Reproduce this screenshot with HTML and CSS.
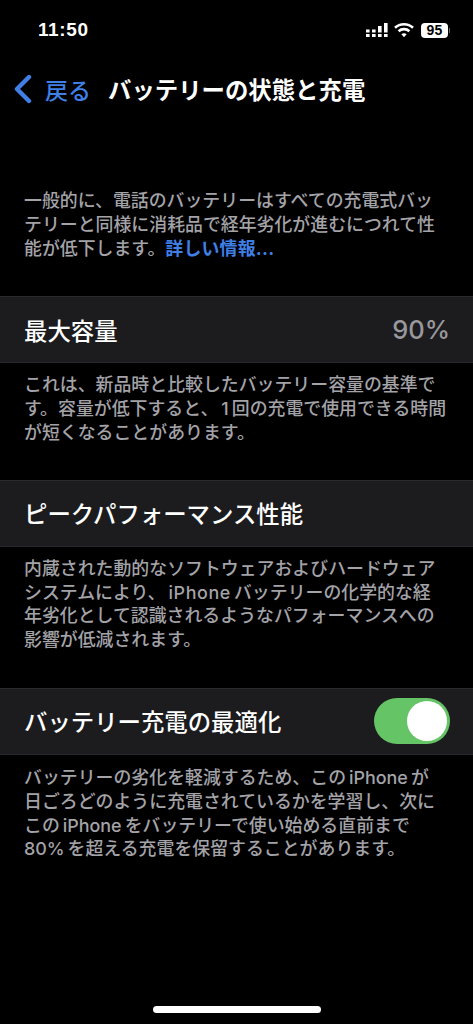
FILE: index.html
```html
<!DOCTYPE html>
<html lang="ja">
<head>
<meta charset="utf-8">
<title>バッテリーの状態と充電</title>
<link rel="stylesheet" href="styles.css">
</head>
<body>
<div class="phone">
  <header class="status">
    <span class="time">11:50</span>
    <div class="status-icons">
      <svg class="cell" width="22" height="16" viewBox="0 0 22 16" fill="#fff">
        <rect x="0" y="7.5" width="3.6" height="3"/><rect x="0" y="12" width="3.6" height="3"/>
        <rect x="6" y="7.5" width="3.6" height="3"/><rect x="6" y="12" width="3.6" height="3"/>
        <rect x="12" y="4" width="3.6" height="6.5"/><rect x="12" y="12" width="3.6" height="3"/>
        <rect x="18" y="1" width="3.6" height="9.5"/><rect x="18" y="12" width="3.6" height="3"/>
      </svg>
      <svg class="wifi" width="20" height="16" viewBox="0 0 20 16" fill="none" stroke="#fff" stroke-width="2.6">
        <path d="M1 5.8C6 1 14 1 19 5.8"/>
        <path d="M4.6 9.2C7.6 6.4 12.4 6.4 15.4 9.2"/>
        <path d="M10 15.2L7.4 12.2C8.8 11 11.2 11 12.6 12.2Z" fill="#fff" stroke="none"/>
      </svg>
      <div class="battery"><span class="battery-level">95</span><i class="battery-tip"></i></div>
    </div>
  </header>

  <nav class="navbar">
    <svg class="chevron" width="20" height="30" viewBox="0 0 20 30" fill="none" stroke="#3f7fe6" stroke-width="4.4" stroke-linecap="round" stroke-linejoin="round">
      <path d="M16 3L4 15L16 27"/>
    </svg>
    <span class="back">戻る</span>
    <h1 class="title">バッテリーの状態と充電</h1>
  </nav>

  <p class="note intro">一般的に、電話のバッテリーはすべての充電式バッ<br>テリーと同様に消耗品で経年劣化が進むにつれて性<br>能が低下します。<a class="link">詳しい情報...</a></p>

  <section class="row first">
    <span class="label">最大容量</span>
    <span class="value">90%</span>
  </section>
  <p class="note">これは、新品時と比較したバッテリー容量の基準で<br>す。容量が低下すると、<span class="lat">1</span>回の充電で使用できる時間<br>が短くなることがあります。</p>

  <section class="row second">
    <span class="label">ピークパフォーマンス性能</span>
  </section>
  <p class="note">内蔵された動的なソフトウェアおよびハードウェア<br>システムにより、<span class="lat wide">iPhone</span>バッテリーの化学的な経<br>年劣化として認識されるようなパフォーマンスへの<br>影響が低減されます。</p>

  <section class="row third">
    <span class="label">バッテリー充電の最適化</span>
    <div class="toggle"><i class="knob"></i></div>
  </section>
  <p class="note">バッテリーの劣化を軽減するため、この<span class="lat">iPhone</span>が<br>日ごろどのように充電されているかを学習し、次に<br>この<span class="lat">iPhone</span>をバッテリーで使い始める直前まで<br><span class="lat start">80%</span>を超える充電を保留することがあります。</p>

  <div class="home-indicator"></div>
</div>
</body>
</html>
```
FILE: styles.css
```css
* { box-sizing: border-box; }
html, body { margin: 0; padding: 0; background: #000; }
body { font-family: Inter, "Noto Sans CJK JP", sans-serif; color: #fff; }
.phone { position: relative; width: 473px; height: 1024px; overflow: hidden; background: #000; }

.status { height: 60px; padding: 20px 25px 0 38px; display: flex; justify-content: space-between; align-items: flex-start; }
.time { font-size: 19px; font-weight: 700; line-height: 20px; letter-spacing: 0.6px; font-family: "Liberation Sans", sans-serif; }
.status-icons { display: flex; align-items: center; gap: 6px; height: 20px; }
.battery { position: relative; width: 27px; height: 15px; background: #fff; border-radius: 4px; color: #000; display: flex; align-items: center; justify-content: center; margin-left: 1px; }
.battery-level { font-family: "Liberation Sans", sans-serif; font-size: 14px; font-weight: 700; line-height: 15px; letter-spacing: 0.3px; }
.battery-tip { position: absolute; right: -2px; top: 5px; width: 1px; height: 5px; background: #666; }

.navbar { height: 58px; display: flex; align-items: center; padding-left: 13px; }
.chevron { flex: none; }
.back { color: #3f7fe6; font-size: 23px; margin-left: 12px; line-height: 30px; font-weight: 500; font-family: "Noto Sans CJK JP", sans-serif; }
.title { margin: 0 0 0 17px; font-size: 23.4px; font-weight: 700; line-height: 30px; white-space: nowrap; font-family: "Noto Sans CJK JP", sans-serif; }

.note { margin: 0; padding: 0 24px; font-size: 17.9px; line-height: 23.8px; color: #a3a3a8; white-space: nowrap; font-weight: 500; }
.intro { margin-top: 71px; }
.link { color: #3f7fe6; font-weight: 700; letter-spacing: 0.2px; }
.lat { margin: 0 3px; }
.wide { letter-spacing: 0.6px; }
.start { margin-left: 0; }

.row { height: 67px; padding: 0 23px 0 24px; background: #1c1c1e; border-top: 1px solid #2a2a2c; border-bottom: 1px solid #2a2a2c; display: flex; align-items: center; justify-content: space-between; }
.first { margin-top: 36px; margin-bottom: 10px; }
.second { margin-top: 35px; margin-bottom: 10px; }
.third { margin-top: 36px; margin-bottom: 11px; }
.label { font-size: 23.4px; font-weight: 500; }
.value { font-size: 25.5px; font-weight: 500; color: #98989d; }

.toggle { position: relative; width: 76px; height: 46px; border-radius: 23px; background: #65c466; }
.knob { position: absolute; right: 3px; top: 3px; width: 40px; height: 40px; border-radius: 50%; background: #fff; }

.home-indicator { position: absolute; left: 153px; bottom: 11px; width: 168px; height: 7px; border-radius: 4px; background: #fff; }
```
